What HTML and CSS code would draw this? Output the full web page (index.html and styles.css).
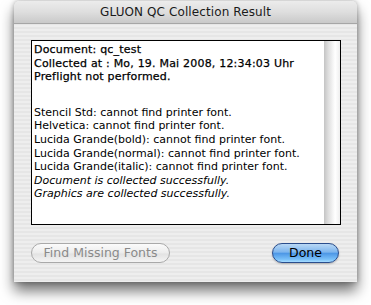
FILE: index.html
```html
<!DOCTYPE html>
<html>
<head>
<meta charset="utf-8">
<link rel="stylesheet" href="styles.css">
</head>
<body>
<div class="window">
  <div class="titlebar">GLUON QC Collection Result</div>
  <div class="content">
    <div class="report">
      <div class="text">
        <div class="line strong">Document: qc_test</div>
        <div class="line strong">Collected at : Mo, 19. Mai 2008, 12:34:03 Uhr</div>
        <div class="line strong">Preflight not performed.</div>
        <div class="blank"></div>
        <div class="line">Stencil Std: cannot find printer font.</div>
        <div class="line">Helvetica: cannot find printer font.</div>
        <div class="line">Lucida Grande(bold): cannot find printer font.</div>
        <div class="line">Lucida Grande(normal): cannot find printer font.</div>
        <div class="line">Lucida Grande(italic): cannot find printer font.</div>
        <div class="line em">Document is collected successfully.</div>
        <div class="line em">Graphics are collected successfully.</div>
      </div>
      <div class="track"></div>
    </div>
    <div class="buttons">
      <div class="btn disabled">Find Missing Fonts</div>
      <div class="btn primary">Done</div>
    </div>
  </div>
</div>
</body>
</html>
```
FILE: styles.css
```css
html, body {
  margin: 0;
  padding: 0;
  background: #ffffff;
}
body {
  width: 371px;
  height: 305px;
  overflow: hidden;
  font-family: "DejaVu Sans", sans-serif;
}
.window {
  margin: 1px 0 0 14px;
  width: 343px;
  height: 281px;
  border-radius: 5px 5px 0 0;
  background-color: #ececec;
  background-image: repeating-linear-gradient(180deg, #eeeeee 0, #eeeeee 2px, #e6e6e6 2px, #e6e6e6 4px);
  box-shadow: 0 9px 14px rgba(0, 0, 0, 0.55), 0 0 5px rgba(0, 0, 0, 0.3);
  display: flex;
  flex-direction: column;
  overflow: hidden;
}
.titlebar {
  height: 22px;
  line-height: 23px;
  text-align: center;
  font-size: 12px;
  color: #1a1a1a;
  background: linear-gradient(180deg, #ececec 0%, #dedede 50%, #c9c9c9 100%);
  border-bottom: 1px solid #a6a6a6;
  border-radius: 5px 5px 0 0;
  letter-spacing: 0.1px;
}
.content {
  flex: 1;
  padding: 16px 18px 0 17px;
  display: flex;
  flex-direction: column;
}
.report {
  height: 183px;
  width: 308px;
  border: 1px solid #000;
  background: #fff;
  display: flex;
}
.text {
  flex: 1;
  padding: 2px 0 0 2px;
  font-size: 11px;
  color: #000;
}
.line {
  height: 13.6px;
  line-height: 13.6px;
  white-space: nowrap;
}
.blank {
  height: 22px;
}
.strong {
  letter-spacing: 0.2px;
  -webkit-text-stroke: 0.25px #000;
}
.em {
  font-style: italic;
}
.track {
  width: 16px;
  background: linear-gradient(90deg, #c4c4c4 0%, #dcdcdc 25%, #f4f4f4 55%, #ffffff 70%, #eeeeee 100%);
}
.buttons {
  margin-top: 18px;
  display: flex;
  justify-content: space-between;
  align-items: center;
}
.btn {
  height: 18px;
  line-height: 18px;
  border-radius: 10px;
  font-size: 12.5px;
  text-align: center;
}
.disabled {
  width: 137px;
  border: 1px solid #a9a9a9;
  color: #8a8a8a;
  background: linear-gradient(180deg, #fbfbfb 0%, #ececec 50%, #e2e2e2 55%, #f4f4f4 100%);
}
.primary {
  width: 65px;
  border: 1px solid #2a4d8c;
  color: #000;
  background: linear-gradient(180deg, #b9d8f5 0%, #7db5ee 45%, #4d97e6 52%, #79c0f9 85%, #a6dcff 100%);
  box-shadow: 0 1px 2px rgba(0, 0, 0, 0.25);
}
```
